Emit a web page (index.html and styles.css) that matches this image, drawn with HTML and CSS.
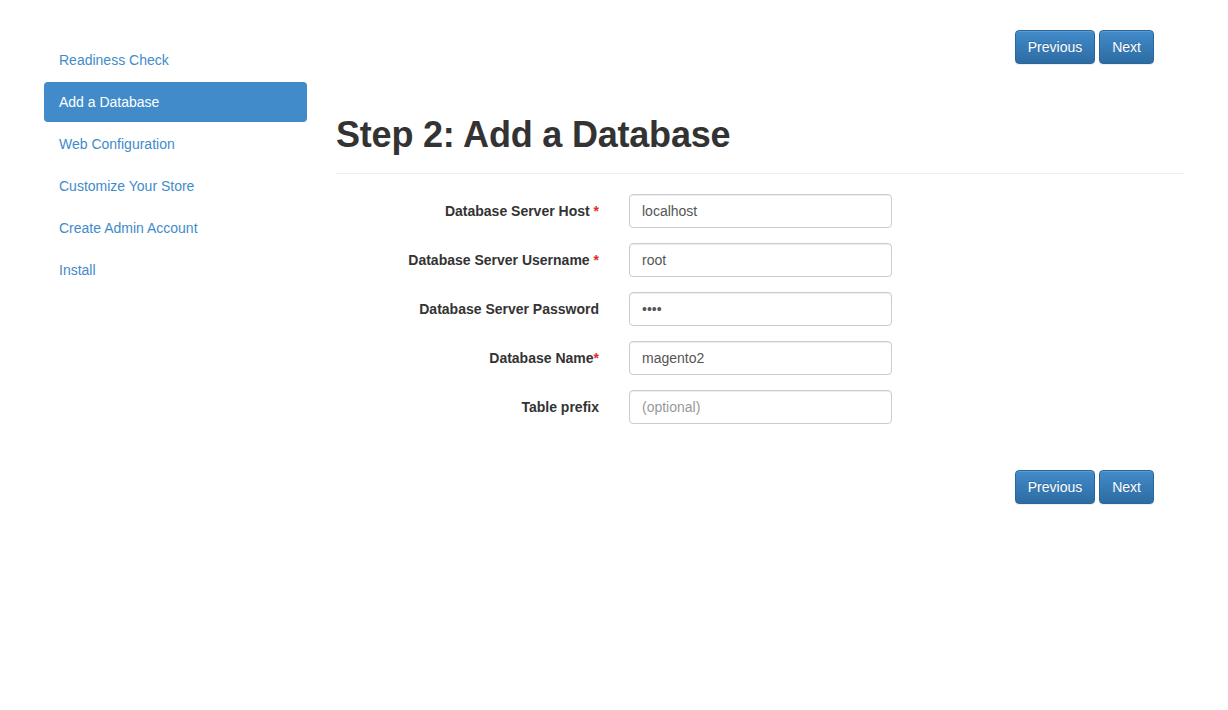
FILE: index.html
```
<html>
	<head>
		<link rel="stylesheet" href="styles.css">
	</head>
	<body>
		<div class="setup-container">
			<ul class="nav-steps">
				<li><a href="#">Readiness Check</a></li>
				<li class="active"><a href="#">Add a Database</a></li>
				<li><a href="#">Web Configuration</a></li>
				<li><a href="#">Customize Your Store</a></li>
				<li><a href="#">Create Admin Account</a></li>
				<li><a href="#">Install</a></li>
			</ul>
			<div class="step-content">
				<div class="btn-row">
					<button class="btn btn-primary">Previous</button>
					<button class="btn btn-primary">Next</button>
				</div>
				<h1 class="page-header">Step 2: Add a Database</h1>
				<form class="form-horizontal">
					<div class="form-group">
						<label class="control-label">Database Server Host <span class="required">*</span></label>
						<input class="form-control" type="text" value="localhost">
					</div>
					<div class="form-group">
						<label class="control-label">Database Server Username <span class="required">*</span></label>
						<input class="form-control" type="text" value="root">
					</div>
					<div class="form-group">
						<label class="control-label">Database Server Password</label>
						<input class="form-control" type="password" value="root">
					</div>
					<div class="form-group">
						<label class="control-label">Database Name<span class="required">*</span></label>
						<input class="form-control" type="text" value="magento2">
					</div>
					<div class="form-group">
						<label class="control-label">Table prefix</label>
						<input class="form-control" type="text" placeholder="(optional)">
					</div>
				</form>
				<div class="btn-row bottom">
					<button class="btn btn-primary">Previous</button>
					<button class="btn btn-primary">Next</button>
				</div>
			</div>
		</div>
	</body>
</html>
```
FILE: styles.css
```
html,body{
	margin:0;
	padding:0;
	background:#fff;
	font-family:"Liberation Sans", Arial, sans-serif;
	font-size:14px;
	line-height:1.42857;
	color:#333;
}
.setup-container{
	display:flex;
	padding:30px 44px 0 44px;
	gap:29px;
}
.nav-steps{
	list-style:none;
	margin:10px 0 0 0;
	padding:0;
	width:263px;
	flex:none;
}
.nav-steps li{
	margin-bottom:2px;
}
.nav-steps li a{
	display:block;
	padding:11px 15px 9px 15px;
	border-radius:4px;
	color:#428bca;
	text-decoration:none;
}
.nav-steps li.active a{
	background-color:#428bca;
	color:#fff;
}
.step-content{
	width:848px;
	flex:none;
}
.btn-row{
	display:flex;
	justify-content:flex-end;
	gap:4px;
	padding-right:30px;
}
.btn-row.bottom{
	margin-top:46px;
}
.btn{
	font-family:"Liberation Sans", Arial, sans-serif;
	font-size:14px;
	line-height:1.42857;
	padding:7px 12px 5px 12px;
	border-radius:4px;
	cursor:pointer;
	height:34px;
}
.btn-primary{
	color:#fff;
	background-image:linear-gradient(to bottom,#428bca 0,#2d6ca2 100%);
	border:1px solid #2b669a;
	box-shadow:inset 0 1px 0 rgba(255,255,255,.15),0 1px 1px rgba(0,0,0,.075);
	text-shadow:0 -1px 0 rgba(0,0,0,.2);
}
.page-header{
	font-size:36px;
	font-weight:bold;
	letter-spacing:-0.2px;
	line-height:1.1;
	margin:51px 0 20px 0;
	padding-bottom:18px;
	border-bottom:1px solid #eee;
}
.form-group{
	display:flex;
	align-items:flex-start;
	margin-bottom:15px;
}
.control-label{
	width:263px;
	flex:none;
	text-align:right;
	font-weight:bold;
	padding-top:8px;
	box-sizing:border-box;
}
.required{
	color:#e02b27;
}
.form-control{
	width:263px;
	height:34px;
	box-sizing:border-box;
	padding:6px 12px;
	font-family:"Liberation Sans", Arial, sans-serif;
	font-size:14px;
	color:#555;
	border:1px solid #ccc;
	border-radius:4px;
	box-shadow:inset 0 1px 1px rgba(0,0,0,.075);
	margin-left:30px;
}
.form-control::placeholder{
	color:#999;
}
```
